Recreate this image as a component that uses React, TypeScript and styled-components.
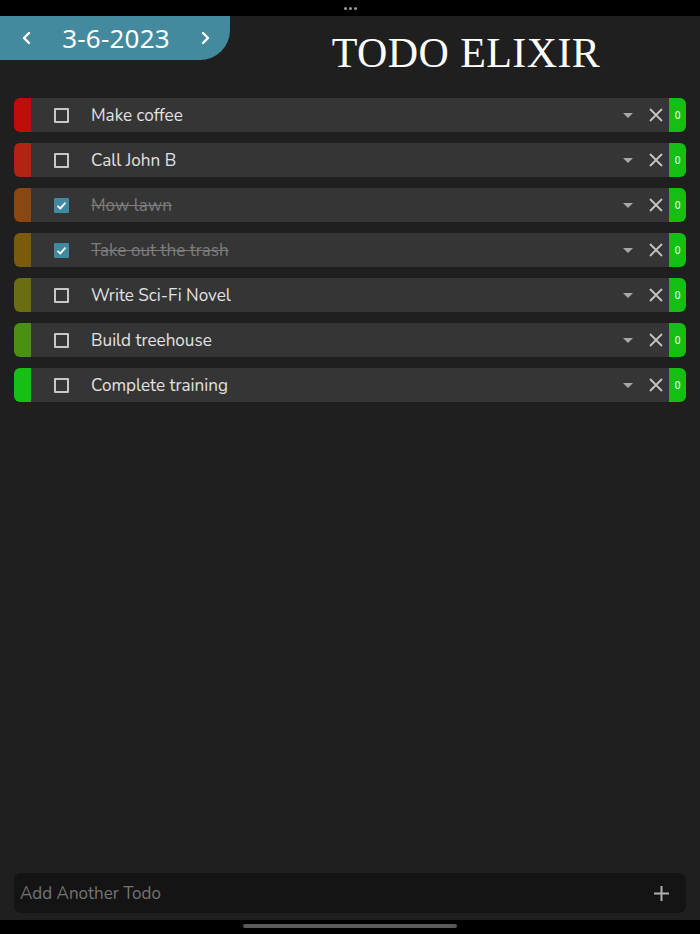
import React from "react";
import styled, { createGlobalStyle } from "styled-components";

const Global = createGlobalStyle`
  html, body { margin: 0; padding: 0; background: #1f1f1f; }
  * { box-sizing: border-box; }
`;

const Screen = styled.div`
  width: 700px;
  height: 934px;
  display: flex;
  flex-direction: column;
  background: #1f1f1f;
  font-family: "Nunito", "Noto Sans", sans-serif;
  overflow: hidden;
`;

const StatusBar = styled.div`
  height: 16px;
  background: #000;
  display: flex;
  align-items: center;
  justify-content: center;
  gap: 2px;
`;

const Dot = styled.span`
  width: 3px;
  height: 3px;
  border-radius: 50%;
  background: #9a9a9a;
`;

const Header = styled.div`
  display: flex;
  height: 82px;
`;

const DatePill = styled.div`
  width: 230px;
  height: 44px;
  background: #448a9f;
  border-bottom-right-radius: 30px;
  display: flex;
  align-items: center;
  padding-left: 20px;
  padding-right: 18px;
  justify-content: space-between;
  color: #fff;
`;

const DateText = styled.span`
  font-family: "Noto Sans", sans-serif;
  font-size: 26px;
  letter-spacing: 0.2px;
  margin-top: -1px;
`;

const Arrow = styled.svg`
  width: 14px;
  height: 14px;
`;

const Title = styled.h1`
  flex: 1;
  margin: 0;
  text-align: center;
  padding-top: 13px;
  padding-left: 2px;
  font-family: "Liberation Serif", serif;
  font-weight: 400;
  font-size: 42px;
  letter-spacing: 0.4px;
  color: #fff;
`;

const List = styled.div`
  display: flex;
  flex-direction: column;
  gap: 11px;
  padding: 0 14px;
`;

const Row = styled.div`
  display: flex;
  height: 34px;
`;

const Strip = styled.div<{ $color: string }>`
  width: 17px;
  background: ${(p) => p.$color};
  border-radius: 6px 0 0 6px;
`;

const Body = styled.div`
  flex: 1;
  display: flex;
  align-items: center;
  background: #353535;
`;

const Check = styled.div<{ $done: boolean }>`
  width: 15px;
  height: 15px;
  margin-left: 23px;
  border: ${(p) => (p.$done ? "none" : "2px solid #c8c8c8")};
  background: ${(p) => (p.$done ? "#3f8aa2" : "transparent")};
  border-radius: 1px;
  display: flex;
  align-items: center;
  justify-content: center;
`;

const Label = styled.span<{ $done: boolean }>`
  flex: 1;
  margin-left: 22px;
  font-size: 17.1px;
  color: ${(p) => (p.$done ? "#7c7c7c" : "#e2e2e2")};
  text-decoration: ${(p) => (p.$done ? "line-through" : "none")};
  text-decoration-thickness: 1px;
`;

const Caret = styled.div`
  width: 0;
  height: 0;
  border-left: 5px solid transparent;
  border-right: 5px solid transparent;
  border-top: 5px solid #a8a8a8;
  margin-right: 16px;
`;

const Close = styled.svg`
  width: 14px;
  height: 14px;
  margin-right: 6px;
`;

const Count = styled.div`
  width: 17px;
  background: #13bf13;
  border-radius: 0 6px 6px 0;
  color: #fff;
  font-size: 10px;
  display: flex;
  align-items: center;
  justify-content: center;
  font-family: "Noto Sans", sans-serif;
`;

const Spacer = styled.div`
  flex: 1;
`;

const AddBar = styled.div`
  margin: 0 14px;
  height: 40px;
  background: #141414;
  border-radius: 7px;
  display: flex;
  align-items: center;
  padding: 0 16px 0 6px;
  justify-content: space-between;
`;

const AddText = styled.span`
  font-size: 17px;
  color: #757575;
`;

const Plus = styled.svg`
  width: 17px;
  height: 17px;
`;

const HomeBar = styled.div`
  height: 14px;
  margin-top: 7px;
  background: #000;
  display: flex;
  justify-content: center;
  padding-top: 4px;
`;

const Indicator = styled.div`
  width: 214px;
  height: 4px;
  border-radius: 2px;
  background: #5a5a5a;
`;

const todos = [
  { text: "Make coffee", color: "#c10c0c", done: false },
  { text: "Call John B", color: "#b22311", done: false },
  { text: "Mow lawn", color: "#8b4712", done: true },
  { text: "Take out the trash", color: "#7a5b0b", done: true },
  { text: "Write Sci-Fi Novel", color: "#6a6d12", done: false },
  { text: "Build treehouse", color: "#4a9012", done: false },
  { text: "Complete training", color: "#14c014", done: false },
];

export default function App() {
  return (
    <>
      <Global />
      <Screen>
        <StatusBar>
          <Dot />
          <Dot />
          <Dot />
        </StatusBar>
        <Header>
          <DatePill>
            <Arrow viewBox="0 0 14 14">
              <path d="M9 2 L4 7 L9 12" fill="none" stroke="#fff" strokeWidth="2.4" strokeLinecap="round" strokeLinejoin="round" />
            </Arrow>
            <DateText>3-6-2023</DateText>
            <Arrow viewBox="0 0 14 14">
              <path d="M5 2 L10 7 L5 12" fill="none" stroke="#fff" strokeWidth="2.4" strokeLinecap="round" strokeLinejoin="round" />
            </Arrow>
          </DatePill>
          <Title>TODO ELIXIR</Title>
        </Header>
        <List>
          {todos.map((t) => (
            <Row key={t.text}>
              <Strip $color={t.color} />
              <Body>
                <Check $done={t.done}>
                  {t.done && (
                    <svg width="11" height="11" viewBox="0 0 11 11">
                      <path d="M1.5 5.8 L4.3 8.4 L9.5 2.6" fill="none" stroke="#fff" strokeWidth="1.8" />
                    </svg>
                  )}
                </Check>
                <Label $done={t.done}>{t.text}</Label>
                <Caret />
                <Close viewBox="0 0 14 14">
                  <path d="M1 1 L13 13 M13 1 L1 13" stroke="#c4c4c4" strokeWidth="1.8" />
                </Close>
              </Body>
              <Count>0</Count>
            </Row>
          ))}
        </List>
        <Spacer />
        <AddBar>
          <AddText>Add Another Todo</AddText>
          <Plus viewBox="0 0 17 17">
            <path d="M8.5 1 V16 M1 8.5 H16" stroke="#b0b0b0" strokeWidth="2" />
          </Plus>
        </AddBar>
        <HomeBar>
          <Indicator />
        </HomeBar>
      </Screen>
    </>
  );
}
